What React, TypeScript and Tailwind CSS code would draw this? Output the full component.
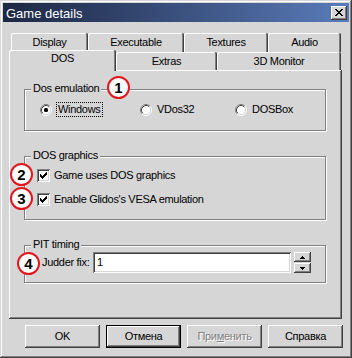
import React from "react";

const raised =
  "shadow-[inset_-1px_-1px_0_#404040,inset_1px_1px_0_#fff,inset_-2px_-2px_0_#808080]";
const sunken =
  "shadow-[inset_1px_1px_0_#808080,inset_-1px_-1px_0_#fff,inset_2px_2px_0_#404040,inset_-2px_-2px_0_#d6d6d6]";
const etched = "border border-[#808080] shadow-[inset_1px_1px_0_#fff,1px_1px_0_#fff]";

const backRow = [
  { label: "Display", w: "w-[77px]" },
  { label: "Executable", w: "w-[96px]" },
  { label: "Textures", w: "w-[84px]" },
  { label: "Audio", w: "w-[73px]" },
];

const frontRow = [
  { label: "Extras", w: "w-[101px]" },
  { label: "3D Monitor", w: "w-[124px]" },
];

const tabEdge =
  "rounded-t-[2px] shadow-[inset_-1px_0_0_#404040,inset_1px_1px_0_#fff,inset_-2px_0_0_#808080]";

function Radio({ checked }: { checked?: boolean }) {
  return (
    <svg width="12" height="12" viewBox="0 0 12 12" className="shrink-0">
      <circle cx="6" cy="6" r="5" fill="#fff" />
      <path d="M2.11 9.89A5.5 5.5 0 0 1 9.89 2.11" stroke="#808080" fill="none" />
      <path d="M9.89 2.11A5.5 5.5 0 0 1 2.11 9.89" stroke="#fff" fill="none" />
      <path d="M2.82 9.18A4.5 4.5 0 0 1 9.18 2.82" stroke="#404040" fill="none" />
      <path d="M9.18 2.82A4.5 4.5 0 0 1 2.82 9.18" stroke="#d6d6d6" fill="none" />
      {checked && <rect x="4" y="4" width="4" height="4" rx="1.5" fill="#000" />}
    </svg>
  );
}

function CheckBox() {
  // classic 7x7 tick, one 1x3 column per x
  const cols = [2, 3, 4, 3, 2, 1, 0];
  return (
    <span className={`w-[13px] h-[13px] shrink-0 bg-white flex items-center justify-center ${sunken}`}>
      <svg width="7" height="7" viewBox="0 0 7 7" shapeRendering="crispEdges">
        {cols.map((y, x) => (
          <rect key={x} x={x} y={y} width="1" height="3" fill="#000" />
        ))}
      </svg>
    </span>
  );
}

function Badge({ n, className }: { n: number; className: string }) {
  return (
    <div
      className={`absolute w-[23px] h-[23px] rounded-full border-2 border-[#e3161e] bg-white flex items-center justify-center text-[15px] font-bold leading-none text-black tracking-normal ${className}`}
    >
      {n}
    </div>
  );
}

function Legend({ children }: { children: React.ReactNode }) {
  return (
    <span className="absolute -top-[8px] left-[6px] px-[2px] bg-[#d6d6d6] leading-[13px]">
      {children}
    </span>
  );
}

function Button({ children, isDefault }: { children: React.ReactNode; isDefault?: boolean }) {
  return (
    <div
      className={`w-[75px] h-[23px] flex items-center justify-center bg-[#d6d6d6] ${
        isDefault
          ? "shadow-[inset_0_0_0_1px_#000,inset_-2px_-2px_0_#404040,inset_2px_2px_0_#fff,inset_-3px_-3px_0_#808080]"
          : raised
      }`}
    >
      {children}
    </div>
  );
}

function CloseGlyph() {
  const rows = [
    [0, 6],
    [1, 5],
    [2, 4],
    [3, 3],
    [2, 4],
    [1, 5],
    [0, 6],
  ];
  return (
    <svg width="8" height="7" viewBox="0 0 8 7" shapeRendering="crispEdges">
      {rows.map(([a, b], y) => (
        <g key={y}>
          <rect x={a} y={y} width="2" height="1" fill="#000" />
          <rect x={b} y={y} width="2" height="1" fill="#000" />
        </g>
      ))}
    </svg>
  );
}

export default function App() {
  return (
    <div
      className={`w-[352px] h-[358px] p-[3px] flex flex-col bg-[#d6d6d6] text-[11px] text-black tracking-[-0.3px] font-['Liberation_Sans',Arial,sans-serif] shadow-[inset_-1px_-1px_0_#404040,inset_1px_1px_0_#d6d6d6,inset_-2px_-2px_0_#808080,inset_2px_2px_0_#fff]`}
    >
      {/* caption */}
      <div className="h-[19px] flex items-center justify-between pl-[3px] pr-[2px] bg-linear-to-r from-[#1d2843] to-[#5a7cbb]">
        <span className="text-white text-[13px] leading-none tracking-normal mt-[2px]">Game details</span>
        <div className={`w-[16px] h-[14px] flex items-center justify-center bg-[#d6d6d6] ${raised}`}>
          <CloseGlyph />
        </div>
      </div>

      {/* tabs */}
      <div className="mt-[11px] ml-[6px] w-[333px] flex flex-col">
        <div className="flex h-[19px] pl-[2px]">
          {backRow.map((t) => (
            <div key={t.label} className={`${t.w} h-full flex items-center justify-center pb-[1px] ${tabEdge}`}>
              {t.label}
            </div>
          ))}
        </div>
        <div className="flex h-[18px]">
          <div
            className={`relative z-10 w-[107px] h-[21px] -mt-[2px] bg-[#d6d6d6] flex items-center justify-center pb-[5px] ${tabEdge}`}
          >
            DOS
          </div>
          {frontRow.map((t) => (
            <div key={t.label} className={`${t.w} h-full flex items-center justify-center ${tabEdge}`}>
              {t.label}
            </div>
          ))}
        </div>

        {/* panel */}
        <div
          className={`h-[249px] flex flex-col px-[15px] pt-[19px] shadow-[inset_-1px_-1px_0_#404040,inset_1px_1px_0_#fff,inset_-2px_-2px_0_#808080]`}
        >
          <div className={`relative w-[302px] h-[42px] pl-[15px] pt-[12px] ${etched}`}>
            <Legend>Dos emulation</Legend>
            <Badge n={1} className="left-[82px] -top-[14px]" />
            <div className="flex h-[15px] items-center">
              <div className="w-[100px] flex items-center gap-[4px]">
                <Radio checked />
                <span className="px-[1px] h-[15px] leading-[13px] border border-dotted border-black">Windows</span>
              </div>
              <div className="w-[95px] flex items-center gap-[5px]">
                <Radio />
                <span className="leading-[13px]">VDos32</span>
              </div>
              <div className="flex items-center gap-[5px]">
                <Radio />
                <span className="leading-[13px]">DOSBox</span>
              </div>
            </div>
          </div>

          <div className={`relative mt-[25px] w-[302px] h-[64px] pl-[12px] pt-[12px] flex flex-col gap-[11px] ${etched}`}>
            <Legend>DOS graphics</Legend>
            <Badge n={2} className="-left-[15px] top-[6px]" />
            <Badge n={3} className="-left-[15px] top-[30px]" />
            <div className="flex h-[13px] items-center gap-[4px]">
              <CheckBox />
              <span className="leading-[13px]">Game uses DOS graphics</span>
            </div>
            <div className="flex h-[13px] items-center gap-[4px]">
              <CheckBox />
              <span className="leading-[13px]">Enable Glidos's VESA emulation</span>
            </div>
          </div>

          <div className={`relative mt-[25px] w-[302px] h-[38px] pl-[17px] pt-[6px] ${etched}`}>
            <Legend>PIT timing</Legend>
            <Badge n={4} className="-left-[8px] top-[6px]" />
            <div className="flex h-[21px] items-center">
              <span className="leading-[13px] w-[51px]">Judder fix:</span>
              <div className={`w-[198px] h-[21px] bg-white pl-[4px] flex items-center ${sunken}`}>1</div>
              <div className="ml-[3px] flex flex-col gap-[1px]">
                <div className={`w-[17px] h-[10px] flex items-center justify-center bg-[#d6d6d6] ${raised}`}>
                  <svg width="5" height="3" viewBox="0 0 5 3" shapeRendering="crispEdges">
                    <rect x="2" y="0" width="1" height="1" fill="#000" />
                    <rect x="1" y="1" width="3" height="1" fill="#000" />
                    <rect x="0" y="2" width="5" height="1" fill="#000" />
                  </svg>
                </div>
                <div className={`w-[17px] h-[10px] flex items-center justify-center bg-[#d6d6d6] ${raised}`}>
                  <svg width="5" height="3" viewBox="0 0 5 3" shapeRendering="crispEdges">
                    <rect x="0" y="0" width="5" height="1" fill="#000" />
                    <rect x="1" y="1" width="3" height="1" fill="#000" />
                    <rect x="2" y="2" width="1" height="1" fill="#000" />
                  </svg>
                </div>
              </div>
            </div>
          </div>
        </div>
      </div>

      {/* dialog buttons */}
      <div className="mt-[6px] ml-[22px] flex gap-[6px]">
        <Button>OK</Button>
        <Button isDefault>Отмена</Button>
        <Button>
          <span className="text-[#808080] [text-shadow:1px_1px_0_#fff]">
            При<span className="underline">м</span>енить
          </span>
        </Button>
        <Button>Справка</Button>
      </div>
    </div>
  );
}
